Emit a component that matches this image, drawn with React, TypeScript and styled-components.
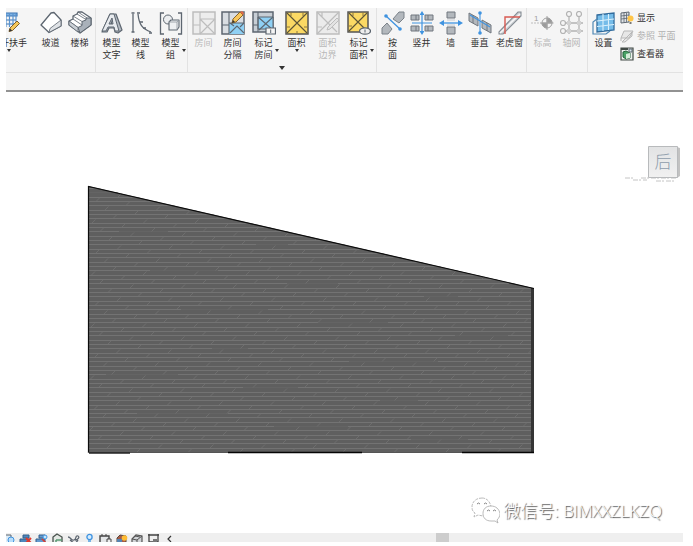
import React from 'react';
import styled, { createGlobalStyle } from 'styled-components';

const GlobalStyle = createGlobalStyle`
  *, *::before, *::after { box-sizing: border-box; }
  body {
    margin: 0;
    background: #fff;
    font-family: "Liberation Sans", "Noto Sans CJK SC", sans-serif;
    color: #333;
  }
  button { font: inherit; color: inherit; border: 0; margin: 0; padding: 0; background: none; cursor: pointer; }
`;

const Window = styled.div`
  display: flex;
  flex-direction: column;
  min-height: 100vh;
  padding: 8px 10px 4px 6px;
`;

const Ribbon = styled.header`
  display: flex;
  background: #f5f5f5;
  border-bottom: 1px solid #e2e2e2;
  overflow: hidden;
`;

const Panel = styled.section<{ $last?: boolean }>`
  display: flex;
  flex-direction: column;
  flex: ${p => (p.$last ? '1 0 auto' : '0 0 auto')};
  min-height: 64px;
  padding: 0 1px;
  border-right: ${p => (p.$last ? '0' : '1px solid #e2e2e2')};
`;

const Tools = styled.div`
  display: flex;
  flex: 1;
  align-items: flex-start;
`;

const ToolButton = styled.button<{ $size: 'normal' | 'medium' | 'wide' | 'cut' }>`
  display: flex;
  flex-direction: column;
  align-items: center;
  width: ${p => ({ normal: 29, medium: 31, wide: 33, cut: 54 })[p.$size]}px;
  margin-left: ${p => (p.$size === 'cut' ? '-25px' : '0')};
  padding-top: 3px;
  font-size: 9px;
  line-height: 12px;
  white-space: nowrap;
  &:disabled { color: #b9b9b9; cursor: default; }
`;

const ToolIcon = styled.svg`
  display: block;
  width: 24px;
  height: 24px;
  margin-bottom: 2px;
`;

const LabelRow = styled.span`
  display: grid;
  grid-template-columns: 1fr auto 1fr;
  align-items: center;
  width: 100%;
`;

const Label = styled.span`
  grid-column: 2;
  white-space: pre;
  text-align: center;
`;

const Arrow = styled.svg<{ $large?: boolean }>`
  display: block;
  width: ${p => (p.$large ? 6 : 4)}px;
  height: ${p => (p.$large ? 4 : 3)}px;
  fill: #333;
`;

const SideArrow = styled.span`
  padding: 2px 0 0 2px;
`;

const Expander = styled.button`
  display: flex;
  justify-content: center;
  align-items: flex-start;
  height: 6px;
`;

const Stack = styled.div`
  display: flex;
  flex-direction: column;
  padding: 1px 0 0 2px;
`;

const StackButton = styled.button`
  display: flex;
  align-items: center;
  gap: 3px;
  height: 18px;
  font-size: 9px;
  line-height: 12px;
  white-space: nowrap;
  &:disabled { color: #b0b0b0; cursor: default; }
`;

const StackIcon = styled.svg`
  width: 14px;
  height: 14px;
`;

const OptionsBar = styled.div`
  height: 19px;
  background: #f5f5f5;
  border-bottom: 2px solid #929292;
`;

const Canvas = styled.main`
  position: relative;
  flex: 1;
  padding-top: 1px;
  background: #fff;
`;

const Elevation = styled.svg`
  display: block;
  width: 100%;
`;

const ViewCube = styled.button`
  position: absolute;
  top: 51px;
  right: 2px;
  display: block;
  svg { display: block; width: 58px; height: 40px; }
`;

const Watermark = styled.div`
  position: absolute;
  right: 21px;
  bottom: 7px;
  display: flex;
  align-items: center;
  gap: 3px;
  font-family: "Open Sans", "Noto Sans CJK SC", sans-serif;
  font-size: 17px;
  font-weight: 300;
  line-height: 30px;
  color: #fff;
  text-shadow: 1px 1px 1px #444;
  white-space: nowrap;
  svg { width: 29px; height: 28px; }
`;

const StatusBar = styled.footer`
  display: flex;
  height: 9px;
  background: #efefef;
  overflow: hidden;
`;

const ViewControls = styled.div`
  display: flex;
  width: 176px;
  overflow: hidden;
`;

const ViewButton = styled.button<{ $first?: boolean }>`
  flex: none;
  width: ${p => (p.$first ? 17 : 16)}px;
  height: 13px;
  margin-left: ${p => (p.$first ? '-6px' : '0')};
  svg { display: block; width: 13px; height: 13px; margin: 0 auto; }
`;

const Track = styled.div`
  display: flex;
  flex: 1;
  padding-left: 37.5%;
`;

const Thumb = styled.div`
  width: 13px;
  background: #cdcdcd;
`;

const S = '#5d6670';
const G = '#bdbdbd';
const B = '#3f93e0';

const icons: Record<string, React.ReactNode> = {
  railing: (
    <>
      <path d="M2 2h18v3H2zM2 9h17M2 13h15" fill="#7fb3e4" stroke="#3a74b4" strokeWidth="1.2" />
      <path d="M9 3v13M12.5 3v13M16 3v11M19 3v8" stroke="#5b94cf" strokeWidth="1.2" />
      <path d="M13 17l7-7 2.5 2.5-7 7-3.500 1z" fill="#f8c95a" stroke="#80602a" />
      <path d="M12 20.500l1-3 2.300 2.300z" fill="#333" />
    </>
  ),
  ramp: (
    <>
      <path d="M2 14 12 2l3-.5 7 7.500v6L10 21.500z" fill="#fff" stroke={S} strokeWidth="1.300" strokeLinejoin="round" />
      <path d="M22 9v6L10 21.500l1-4z" fill="#dfe2e6" stroke={S} strokeWidth=".8" strokeLinejoin="round" />
    </>
  ),
  stair: (
    <>
      <path d="M1 10l4-2V5l4-2 1-2h4l9 6v7L12 22 1 14z" fill="#fff" stroke={S} strokeWidth="1.300" strokeLinejoin="round" />
      <path d="M10 16.500l4-2v-4l4-1.500V7l5 0v7l-11 8z" fill="#a9b1ba" stroke={S} strokeLinejoin="round" />
      <path d="M1 10l9 6.500M5 8l9 6M5 5l9 5.500M9 3l9 5.500M10 1l9 6" stroke={S} strokeWidth=".8" />
      <path d="M1 10l9 6.500v4.500L1 14z" fill="#cbd0d6" stroke={S} strokeWidth=".8" />
    </>
  ),
  modelText: (
    <>
      <path fillRule="evenodd" d="M2 21 10 3h6l6 16-4 3-3-1-1-4H9l-2 4zM11 13h3l-1-5z" fill="#b5bcc4" stroke={S} strokeWidth="1.200" strokeLinejoin="round" />
      <path fillRule="evenodd" d="M2 20 10 3h4l5 17h-4l-1-4H8l-2 4zM9 13h4l-1-6z" fill="#e8ebef" stroke={S} strokeLinejoin="round" />
    </>
  ),
  modelLine: (
    <>
      <path d="M4 3v18M9 3c1 10 4 15 13 18" fill="none" stroke={S} strokeWidth="1.300" />
      <path d="M2.500 2h3M2.500 21h3M8 2h3M20 22h3M11 11h3M14 17h3" stroke={S} strokeWidth="1.600" />
    </>
  ),
  modelGroup: (
    <>
      <path d="M5 2H1.500v21H5M19 2h3.500v21H19" fill="none" stroke={S} strokeWidth="1.300" />
      <circle cx="9" cy="8.500" r="4.500" fill="#eceef0" stroke={S} />
      <path d="M10 11l2-2h8v7l-2 3h-8z" fill="#eef0f2" stroke={S} strokeWidth="1.100" strokeLinejoin="round" />
      <path d="M10 11h8v8M18 11l2-2" fill="none" stroke="#8d959d" strokeWidth=".8" />
    </>
  ),
  room: (
    <>
      <path d="M1 1h22v22H1z" fill="#ededed" stroke={G} strokeWidth="1.500" />
      <path d="M8 1v22M1 14h7M8 8h15M8 8l15 15M23 8 8 23" stroke={G} strokeWidth="1.200" />
    </>
  ),
  roomSplit: (
    <>
      <path d="M1 1h22v22H1z" fill="#d9dde2" stroke={S} strokeWidth="1.500" />
      <path d="M8 12h15v11H8z" fill="#8fd0f4" />
      <path d="M8 1v22M1 14h7M8 12h15M9 22l7-7 7 7M9 12l4 3M23 12l-4 4" stroke={S} strokeWidth="1.100" fill="none" />
      <path d="M12 8 19 1l3 3-7 7-4 1z" fill="#f8c65a" stroke="#8a6426" />
      <path d="M11 12l1-3 2 2z" fill="#333" /><path d="M19 1l3 3 1-2-2-2z" fill="#e06a4a" />
    </>
  ),
  roomTag: (
    <>
      <path d="M1 1h20v20H1z" fill="#c7ced5" stroke={S} strokeWidth="1.500" />
      <path d="M6 6h15v12H6z" fill="#8fd0f4" stroke={S} />
      <path d="M6 1v20M1 14h5M6 6l15 13M21 6 7 19" stroke={S} strokeWidth="1.100" />
      <path d="M14 17h9.500v6H14z" fill="#f4f4f4" stroke={S} strokeWidth="1.200" /><path d="M18.700 18.500v3.500" stroke={S} />
    </>
  ),
  area: (
    <>
      <path d="M1 1h22v22H1z" fill="#fbd964" stroke="#545454" strokeWidth="1.500" />
      <path d="M6 1v4M18 1v4M1 16h4M19 16h4M12 20v3" stroke="#8a7740" />
      <path d="M2 2l20 20M22 2 2 22" stroke="#5c5437" strokeWidth="1.100" />
    </>
  ),
  areaEdge: (
    <>
      <path d="M1 1h22v22H1z" fill="#ebebeb" stroke={G} strokeWidth="1.500" />
      <path d="M1 1l20 20M23 1 1 23M6 1v5M1 16h5" stroke={G} strokeWidth="1.200" />
      <path d="M12 16l9-9 2 2-9 9-3 1z" fill="#e3e3e3" stroke={G} />
    </>
  ),
  areaTag: (
    <>
      <path d="M1 1h20v20H1z" fill="#fbd964" stroke="#545454" strokeWidth="1.500" />
      <path d="M6 1v4M16 1v4M1 15h4" stroke="#8a7740" />
      <path d="M2 2l18 18M20 2 2 20" stroke="#5c5437" strokeWidth="1.100" />
      <ellipse cx="18" cy="20" rx="5.500" ry="3.200" fill="#eee" stroke={S} strokeWidth="1.300" /><path d="M18 18.500v3" stroke={S} />
    </>
  ),
  byFace: (
    <>
      <path d="M12 8 18 1h5v6l-5 5zM1 17l5-5 5 6-4 5H1z" fill="#b3b8bd" stroke="#7b8289" />
      <path d="M5 5l14 13" stroke={B} strokeWidth="1.300" />
      <circle cx="5" cy="5" r="1.800" fill={B} /><circle cx="19" cy="18" r="1.800" fill={B} />
    </>
  ),
  shaft: (
    <>
      <path d="M1 4h8v5H1zM15 4h8v5h-8zM1 15h8v5H1zM15 15h8v5h-8z" fill="#b3b8bd" stroke="#70777e" />
      <path d="M6 4v5M18 4v5M6 15v5M18 15v5" stroke="#70777e" />
      <path d="M12 3v18M2 12h20" stroke={B} strokeWidth="1.200" />
      <path d="M12 0l2.500 4h-5zM12 24l2.500-4h-5z" fill={B} />
    </>
  ),
  wall: (
    <>
      <path d="M8 1h8v6H8zM8 16h8v7H8z" fill="#b3b8bd" stroke="#70777e" />
      <path d="M8 9h8M8 14h8" stroke="#c7cbd0" />
      <path d="M3 12h18" stroke={B} strokeWidth="1.300" />
      <path d="M0 12l5-3v6zM24 12l-5-3v6z" fill={B} />
    </>
  ),
  vertical: (
    <>
      <path d="M1 2l9 5v8l-9-5zM14 9l9 5v8l-9-5z" fill="#b3b8bd" stroke="#70777e" />
      <path d="M5 4v8M19 12v8" stroke="#70777e" />
      <path d="M12 2v20M2 4l20 12" stroke={B} strokeWidth="1.100" />
      <circle cx="12" cy="2" r="1.800" fill={B} /><circle cx="12" cy="22" r="1.800" fill={B} />
    </>
  ),
  dormer: (
    <>
      <path d="M1 21 20 1h3v4L5 23H1z" fill="#ced2d6" stroke="#868d94" strokeWidth="1.100" />
      <path d="M2 22 22 3" stroke="#f5f6f7" strokeWidth="1.500" />
      <path d="M7 23V6h15" fill="none" stroke="#d85a52" strokeWidth="1.400" />
    </>
  ),
  level: (
    <>
      <path d="M0 12h10" stroke={G} strokeDasharray="2 1" strokeWidth="1.200" />
      <text x="3" y="10" fontSize="8" fill="#a0a0a0">1</text>
      <circle cx="16" cy="12" r="5" fill="#f4f4f4" stroke="#a2a2a2" />
      <path d="M16 12V7a5 5 0 0 1 5 5zM16 12v5a5 5 0 0 1-5-5zM16 5v14M9.500 12h13" fill="#9b9b9b" stroke="#a2a2a2" />
    </>
  ),
  gridLines: (
    <>
      <path d="M9 5v18M19 5v18M5 12h18M5 20h18" stroke="#b3b3b3" strokeWidth="1.300" />
      <g fill="#f5f5f5" stroke="#b3b3b3" strokeWidth="1.200"><circle cx="9" cy="3" r="2.500" /><circle cx="19" cy="3" r="2.500" /><circle cx="3" cy="12" r="2.500" /><circle cx="3" cy="20" r="2.500" /></g>
      <path d="M7 10h4v4H7zM17 10h4v4h-4zM7 18h4v4H7zM17 18h4v4h-4z" fill="#d2d2d2" />
    </>
  ),
  workPlane: (
    <>
      <path d="M5 4 22 2v17L5 21z" fill="#75bce9" stroke="#316b9c" strokeWidth="1.300" />
      <path d="M11 3v17M16.500 3v16M5 10l17-2M5 15.500l17-2" stroke="#d9f0fc" strokeWidth="1.100" />
      <path d="M5 8 1 11v12h13l4-3" fill="none" stroke="#4f88b4" strokeWidth="1.200" />
    </>
  ),
};

type Tool = { icon: string; lines: string[]; arrow?: 'side' | 'below'; size?: 'medium' | 'wide' | 'cut'; off?: boolean };

const panels: { name: string; tools: Tool[]; expands?: boolean }[] = [
  {
    name: '楼梯坡道',
    tools: [
      { icon: 'railing', lines: ['栏杆扶手'], arrow: 'below', size: 'cut' },
      { icon: 'ramp', lines: ['坡道'] },
      { icon: 'stair', lines: ['楼梯'] },
    ],
  },
  {
    name: '模型',
    tools: [
      { icon: 'modelText', lines: ['模型', '文字'] },
      { icon: 'modelLine', lines: ['模型', '线'] },
      { icon: 'modelGroup', lines: ['模型', '组'], arrow: 'side', size: 'medium' },
    ],
  },
  {
    name: '房间和面积',
    expands: true,
    tools: [
      { icon: 'room', lines: ['房间'], off: true },
      { icon: 'roomSplit', lines: ['房间', '分隔'] },
      { icon: 'roomTag', lines: ['标记', '房间'], arrow: 'side', size: 'wide' },
      { icon: 'area', lines: ['面积'], arrow: 'below', size: 'wide' },
      { icon: 'areaEdge', lines: ['面积', '边界'], off: true },
      { icon: 'areaTag', lines: ['标记', '面积'], arrow: 'side', size: 'wide' },
    ],
  },
  {
    name: '洞口',
    tools: [
      { icon: 'byFace', lines: ['按', '面'] },
      { icon: 'shaft', lines: ['竖井'] },
      { icon: 'wall', lines: ['墙'] },
      { icon: 'vertical', lines: ['垂直'] },
      { icon: 'dormer', lines: ['老虎窗'], size: 'medium' },
    ],
  },
  {
    name: '基准',
    tools: [
      { icon: 'level', lines: ['标高'], off: true },
      { icon: 'gridLines', lines: ['轴网'], off: true },
    ],
  },
  { name: '工作平面', tools: [{ icon: 'workPlane', lines: ['设置'] }] },
];

const Down = ({ large }: { large?: boolean }) => (
  <Arrow $large={large} viewBox="0 0 6 4" preserveAspectRatio="none"><path d="M0 0h6L3 4z" /></Arrow>
);

const ToolItem = ({ icon, lines, arrow, size, off }: Tool) => (
  <ToolButton $size={size ?? 'normal'} disabled={off}>
    <ToolIcon viewBox="0 0 24 24" fill="none">{icons[icon]}</ToolIcon>
    <LabelRow>
      <Label>{lines.join('\n')}</Label>
      {arrow === 'side' && <SideArrow><Down /></SideArrow>}
    </LabelRow>
    {arrow === 'below' && <Down />}
  </ToolButton>
);

const planeTools = [
  {
    label: '显示',
    icon: (
      <>
        <path d="M1 2 9 1v10l-8 1z" fill="#dfe3e7" stroke={S} />
        <path d="M4 2v9M6.500 2v9M1 5l8-1M1 8l8-1" stroke={S} strokeWidth=".8" />
        <circle cx="10.500" cy="7.500" r="3" fill="#ffc547" /><path d="M9.500 11h2v2h-2z" fill="#777" />
      </>
    ),
  },
  {
    label: '参照 平面',
    off: true,
    icon: <path d="M4 2h9L9 9H1zM1 9v3M3 12l9-9v4l-7 6H2z" fill="#e7e7e7" stroke="#b7b7b7" />,
  },
  {
    label: '查看器',
    icon: (
      <>
        <path d="M1 1h12v12H1z" fill="#eef1ee" stroke="#424b46" strokeWidth="1.200" />
        <path d="M1 2h7" stroke="#424b46" strokeWidth="2" />
        <path d="M3 5l3-1 4 2v5l-4 1-3-2z" fill="#4aa267" stroke="#23633a" />
        <path d="M6 7l4-1v5l-4 1z" fill="#d5ecd9" /><path d="M9 2h3v3H9z" fill="#dce9f0" stroke={S} />
      </>
    ),
  },
];

const viewIcons: { name: string; art: React.ReactNode }[] = [
  { name: '视觉样式', art: <><path d="M2 2h7v8H2z" fill="#dcebf6" stroke={S} /><circle cx="9" cy="7" r="3" fill="#b9defa" stroke={B} /></> },
  { name: '日光路径', art: <><path d="M4 2h6v3H4zM1 6h9v5H1z" fill="#4e87bd" stroke="#335f8b" /><path d="M7 5l5 5M12 5l-5 5" stroke="#dc3a30" strokeWidth="2" /></> },
  { name: '阴影', art: <><path d="M4 2h6v3H4zM1 6h9v5H1z" fill="#639bd0" stroke="#335f8b" /><path d="M7 6l4 4" stroke="#dc3a30" strokeWidth="1.500" /><circle cx="10" cy="4" r="2" fill="#c9e5fa" stroke={B} /></> },
  { name: '渲染', art: <><path d="M2 10V4l4-3 5 3v6l-5 2z" fill="#e3e8e4" stroke="#48514c" strokeWidth="1.300" /><path d="M5 7h6M5 7v4" stroke="#5b9b74" strokeWidth="1.500" /></> },
  { name: '裁剪视图', art: <path d="M1 4c3 0 3 4 6 3s1-5 4-4c2 1 0 4-3 4M3 7l5 4 3-4" fill="none" stroke={S} strokeWidth="1.300" /> },
  { name: '显示裁剪区域', art: <><circle cx="6.500" cy="4" r="2.600" fill="#d4ecff" stroke={B} strokeWidth="1.300" /><path d="M5 7h3v5H5z" fill="#76b3e5" /></> },
  { name: '临时隐藏', art: <><path d="M1 3h9v8H1z" fill="#e4e6e8" stroke="#444" strokeWidth="1.400" /><path d="M2 2h2M6 2h2M8 6h4v5H8z" fill="#eee" stroke="#444" /></> },
  { name: '显示隐藏图元', art: <><path d="M2 5l3-3 6 1v7l-5 2-4-2z" fill="#a55b47" stroke="#59473c" /><path d="M2 6h5v5H2z" fill="#5584b2" /><circle cx="9.500" cy="5" r="2.800" fill="#ffbd35" /></> },
  { name: '临时视图属性', art: <><path d="M1 6l4-4 6 1v6l-5 3-5-2z" fill="#d0d3d6" stroke="#555" strokeWidth="1.200" /><path d="M1 6l5 1 5-4M6 7v5M4 3l5 1" stroke="#555" /></> },
  { name: '显示约束', art: <><path d="M1 2h11M2 1v11M11 1v11M2 9h9" stroke="#444" strokeWidth="1.300" /><path d="M6 6h4v3H6z" fill="#777" /></> },
  { name: '收起', art: <path d="M8 3 5 6l3 3" fill="none" stroke="#333" strokeWidth="1.200" /> },
];

const courses = Array.from({ length: 62 }, (_, r) => Math.round(95 + r * 4.33) + 0.5);
const slashes = courses.flatMap((y, r) =>
  Array.from({ length: 10 }, (_, k) => `M${82 + ((r * 30 + 21) % 51.5) + k * 51.5} ${y}l4 -4`),
);
const breaks = courses.filter((_, r) => r % 3 === 1).map((y, r) => `M${82 + ((r * 137) % 380)} ${y}h${30 + ((r * 53) % 70)}`);

const WallElevation = () => (
  <Elevation viewBox="0 0 677 440" role="img" aria-label="立面">
    <clipPath id="wall"><path d="M82 93 527 195v164H82z" /></clipPath>
    <path d="M82 93 527 195v164H82z" fill="#5f5f5f" />
    <g clipPath="url(#wall)" fill="none">
      <path d={courses.map(y => `M82 ${y}h446`).join('')} stroke="#737373" />
      <path d={breaks.join('')} stroke="#646464" />
      <path d={slashes.join('')} stroke="#727272" strokeWidth=".8" />
    </g>
    <path d="M525 195h3v165h-3z" fill="#353535" />
    <path d="M82.500 360V93.500L528 195.500" fill="none" stroke="#0c0c0c" strokeWidth="1.200" />
    <path d="M82 359.500h446" stroke="#555" />
    <path d="M83 360h41" stroke="#222" strokeWidth="1.500" />
    <path d="M222 359.500h134M456 359.500h72" stroke="#050505" strokeWidth="1.300" />
  </Elevation>
);

export default function App() {
  return (
    <>
      <GlobalStyle />
      <Window lang="zh-CN">
        <Ribbon>
          {panels.map((p, i) => (
            <Panel key={p.name} aria-label={p.name} $last={i === panels.length - 1}>
              <Tools>
                {p.tools.map(t => <ToolItem key={t.icon} {...t} />)}
                {i === panels.length - 1 && (
                  <Stack>
                    {planeTools.map(t => (
                      <StackButton key={t.label} disabled={t.off}>
                        <StackIcon viewBox="0 0 14 14" fill="none">{t.icon}</StackIcon>
                        {t.label}
                      </StackButton>
                    ))}
                  </Stack>
                )}
              </Tools>
              {p.expands && <Expander aria-label={p.name}><Down large /></Expander>}
            </Panel>
          ))}
        </Ribbon>
        <OptionsBar />
        <Canvas>
          <WallElevation />
          <ViewCube aria-label="后">
            <svg viewBox="0 0 58 40">
              <defs>
                <linearGradient id="face" x1="0" y1="0" x2="0" y2="1">
                  <stop offset="0" stopColor="#e2e3e4" /><stop offset="1" stopColor="#f1f1f1" />
                </linearGradient>
              </defs>
              <path d="M2 35h10M10 37h14M18 35h36M33 38h20" stroke="#c4c4c4" strokeDasharray="5 1 2 2" />
              <path d="M54 4l3 1v28l-3 2z" fill="#c2c2c2" />
              <path d="M25.500 3.500h29v31h-29z" fill="url(#face)" stroke="#b8babc" />
              <text x="40" y="25" textAnchor="middle" fontSize="17" fontFamily="Noto Sans CJK SC, sans-serif" fontWeight="300" fill="#8e9cab">后</text>
            </svg>
          </ViewCube>
          <Watermark>
            <svg viewBox="0 0 29 28" fill="#fff" stroke="#a8a8a8" strokeWidth=".8">
              <path d="M11 1C5 1 1 5 1 10c0 3 1 5 3 6l-1 4 4-2 5 1 8-5c1-7-3-13-9-13z" strokeDasharray="3 1" />
              <path d="M20 9c-5 0-8 3-8 7.500S15 24 20 24l4 0 3 2-1-3c2-2 3-4 3-6.500C28 12 25 9 20 9z" />
              <path d="M6 7l1.500-1L9 7M13 7l1.500-1L16 7M16 14l1.500-1 1.500 1M22 14l1.500-1 1.500 1" fill="none" stroke="#666" />
            </svg>
            <span>微信号: BIMXXZLKZQ</span>
          </Watermark>
        </Canvas>
        <StatusBar>
          <ViewControls>
            {viewIcons.map((v, i) => (
              <ViewButton key={v.name} aria-label={v.name} $first={i === 0}>
                <svg viewBox="0 0 13 13" fill="none">{v.art}</svg>
              </ViewButton>
            ))}
          </ViewControls>
          <Track><Thumb /></Track>
        </StatusBar>
      </Window>
    </>
  );
}
